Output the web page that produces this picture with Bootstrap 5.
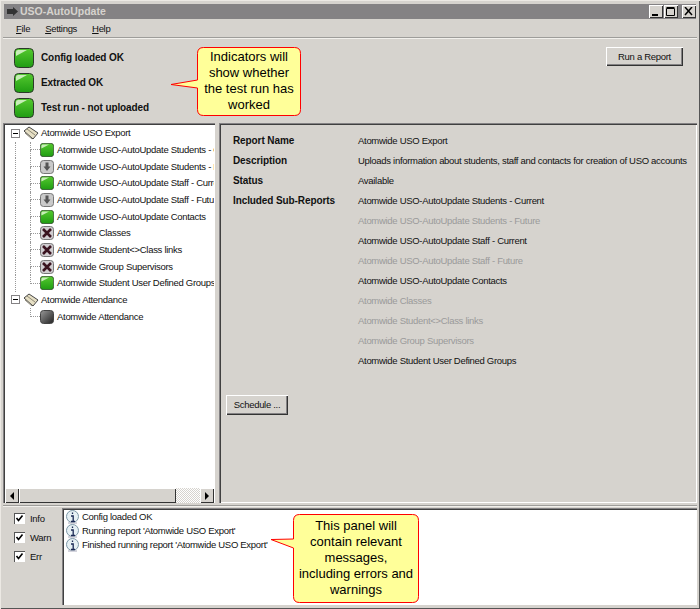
<!DOCTYPE html>
<html lang="en">
<head>
  <meta charset="UTF-8" />
  <title>USO-AutoUpdate</title>
  <link href="https://cdn.jsdelivr.net/npm/bootstrap@5.3.3/dist/css/bootstrap.min.css" rel="stylesheet" />
  <style>
    html, body { height: 100%; }
    body { background: #d6d3ce; color: #111; font: 9.5px/14px "Liberation Sans", sans-serif; letter-spacing: -.3px; overflow: hidden; }
    .app-window { width: 700px; height: 609px; position: relative; padding: 4px 3px 4px 3px; box-shadow: inset 1px 1px 0 #ece9e4, inset -1px -1px 0 #555; }
    .title-bar { height: 15px; background: #848284; color: #d6d3ce; font-weight: 700; font-size: 10.5px; letter-spacing: 0; line-height: 15px; padding-left: 2px; margin: 0 1px; }
    .title-ico { width: 13px; height: 11px; margin-right: 1px; }
    .win-btn { width: 14px; height: 13px; background: #d6d3ce; box-shadow: inset 1px 1px 0 #fff, inset -1px -1px 0 #333; margin-left: 1px; }
    .win-btn svg { display: block; margin: 2px 0 0 2px; }
    .menu-bar { height: 20px; padding: 2px 0 0 13px; gap: 15px; align-items: center; border-bottom: 2px groove #f2f0ec; }
    .menu-bar u { text-underline-offset: 1px; }
    .top-strip { height: 84px; padding: 6px 14px 0 11px; }
    .lamp-row { height: 25px; gap: 7px; font-weight: 700; font-size: 10px; letter-spacing: -.1px; }
    .lamp-row svg { width: 20px; height: 20px; }
    .sys-btn { background: #d6d3ce; border: 0; border-radius: 0; color: #111; font: 9.500px/14px "Liberation Sans", sans-serif; letter-spacing: -.3px; box-shadow: inset 1px 1px 0 #fff, inset -1px -1px 0 #333, inset -2px -2px 0 #848284; padding: 0; }
    .run-btn { width: 77px; height: 19px; margin-top: 2px; }
    .sched-btn { width: 62px; height: 20px; }
    .panes { height: 380px; gap: 4px; }
    .sunken { box-shadow: inset 1px 1px 0 #848284, inset 2px 2px 0 #404040, inset -1px -1px 0 #fff; }
    .tree-pane { width: 212px; flex: none; background: #fff; padding: 2px 1px 0 2px; }
    .tree-list { overflow: hidden; white-space: nowrap; }
    .tree-row { height: 16.67px; }
    .tree-root-guide { width: 11px; flex: none; align-self: stretch; border-right: 1px dotted #999; }
    .tree-root-guide.off { border-right-color: transparent; }
    .tree-gap { width: 14px; flex: none; }
    .tree-twig { width: 10px; flex: none; align-self: stretch; display: flex; flex-direction: column; }
    .tree-twig::before { content: ""; flex: 1; border-left: 1px dotted #999; border-bottom: 1px dotted #999; }
    .tree-twig::after { content: ""; flex: 1; border-left: 1px dotted #999; }
    .tree-twig.end::after { border-left-color: transparent; }
    .tree-ico { width: 14px; height: 14px; flex: none; margin-right: 3px; }
    .tree-box { width: 9px; height: 9px; flex: none; margin: 0 3px 0 6px; border: 1px solid #848284; background: #fff; }
    .tree-box svg { display: block; }
    .tree-book { width: 16px; height: 14px; flex: none; margin-right: 2px; }
    .scroll-bar { height: 15px; flex: none; background: repeating-conic-gradient(#d6d3ce 0 25%, #fff 0 50%) 0 0 / 2px 2px; }
    .scroll-btn { width: 14px; background: #d6d3ce; box-shadow: inset 1px 1px 0 #fff, inset -1px -1px 0 #333; flex: none; }
    .scroll-thumb { width: 157px; background: #d6d3ce; box-shadow: inset 1px 1px 0 #fff, inset -1px -1px 0 #333; flex: none; }
    .detail-pane { flex: 1; padding: 8px 4px 0 14px; line-height: 20px; overflow: hidden; }
    .detail-row { height: 20px; white-space: nowrap; }
    .detail-label { width: 125px; flex: none; font-weight: 700; font-size: 10px; letter-spacing: -.1px; }
    .detail-value.off { color: #9a9a9a; }
    .sched-wrap { margin: 24px 0 0 -7px; }
    .log-strip { height: 100px; margin-top: 2px; border-top: 2px groove #f2f0ec; padding-top: 1px; }
    .check-col { width: 59px; flex: none; padding: 1px 0 0 11px; line-height: 19px; }
    .chk { width: 11px; height: 11px; margin: 0 5px 0 0; border-radius: 0 !important; border: 0; background-color: #fff; box-shadow: inset 1px 1px 0 #555; float: none; }
    .form-check-input.chk:checked { background-color: #fff; border: 0; background-size: 11px 11px; background-image: url("data:image/svg+xml,%3Csvg xmlns='http://www.w3.org/2000/svg' viewBox='0 0 11 11'%3E%3Cpath d='M2.5 5l2 2.5 4-5' fill='none' stroke='%23000' stroke-width='1.6'/%3E%3C/svg%3E"); }
    .log-box { flex: 1; background: #fff; padding: 2px 4px; white-space: nowrap; }
    .log-row { height: 14px; gap: 2px; }
    .log-row svg { width: 14px; height: 14px; flex: none; }
    .callout { position: absolute; color: #000; font: 13px/16px "Liberation Sans", sans-serif; letter-spacing: 0; text-align: center; z-index: 2; }
    .callout svg { position: absolute; left: 0; top: 0; overflow: visible; z-index: -1; }
    .callout-one { left: 197px; top: 47px; width: 104px; height: 69px; padding-top: 2px; }
    .callout-two { left: 293px; top: 514px; width: 126px; height: 89px; padding-top: 4px; }
  </style>
</head>
<body>
  <svg width="0" height="0" class="d-block" style="position:absolute">
    <defs>
      <linearGradient id="gr" x1="0" y1="0" x2="0" y2="1"><stop offset="0" stop-color="#55c92f"/><stop offset="1" stop-color="#1f9c12"/></linearGradient>
      <linearGradient id="dk" x1="0" y1="0" x2="1" y2="1"><stop offset="0" stop-color="#999"/><stop offset="1" stop-color="#222"/></linearGradient>
      <symbol id="i-green" viewBox="0 0 20 20"><rect x=".5" y=".5" width="19" height="19" rx="4" fill="url(#gr)" stroke="#2c3a2a"/><path d="M2 8V4q0-2 2-2h9z" fill="#c8edb8"/></symbol>
      <symbol id="i-down" viewBox="0 0 14 14"><rect x=".5" y=".5" width="13" height="13" rx="3" fill="#c9c9c9" stroke="#777"/><path d="M5.500 2.500h3v4h2L7 11 3.500 6.500h2z" fill="#555"/></symbol>
      <symbol id="i-cross" viewBox="0 0 14 14"><rect x=".5" y=".5" width="13" height="13" rx="3" fill="#d0cdd0" stroke="#777"/><path d="M3 3l8 8M11 3l-8 8" stroke="#3a1420" stroke-width="2.600"/></symbol>
      <symbol id="i-dark" viewBox="0 0 14 14"><rect x=".5" y=".5" width="13" height="13" rx="3" fill="url(#dk)" stroke="#444"/></symbol>
      <symbol id="i-book" viewBox="0 0 16 14"><path d="M1 5l5-4 9 6-5 6z" fill="#e6dfc4" stroke="#444"/><path d="M2 7l7 6M4 3l8 6" stroke="#8f8a78" fill="none"/></symbol>
      <symbol id="i-info" viewBox="0 0 14 14"><circle cx="6.500" cy="6.500" r="6" fill="#e6f0f4" stroke="#7d98a8"/><path d="M6.500 2.500v1.500M5 6h2.200v5M5 11.500h4" stroke="#1c2a55" stroke-width="1.300" fill="none"/><path d="M2 13h9" stroke="#aab" /></symbol>
    </defs>
  </svg>

  <div class="app-window d-flex flex-column">
    <div class="title-bar d-flex align-items-center">
      <svg class="title-ico" viewBox="0 0 13 11"><path d="M1 3h6V1l5 4.500-5 4.500V8H1z" fill="#333"/></svg>
      <span class="flex-grow-1">USO-AutoUpdate</span>
      <span class="win-btn"><svg width="10" height="9"><path d="M1 7h6v2H1z" fill="#000"/></svg></span>
      <span class="win-btn"><svg width="10" height="9"><path d="M.5 1.500h8v7h-8zM.5.500h8" fill="none" stroke="#000"/></svg></span>
      <span class="win-btn ms-1"><svg width="10" height="9"><path d="M1 0l7 8M8 0L1 8" stroke="#000" stroke-width="1.500"/></svg></span>
    </div>

    <div class="menu-bar d-flex">
      <span><u>F</u>ile</span>
      <span><u>S</u>ettings</span>
      <span><u>H</u>elp</span>
    </div>

    <div class="top-strip d-flex justify-content-between">
      <div>
        <div class="lamp-row d-flex align-items-center"><svg><use href="#i-green"/></svg>Config loaded OK</div>
        <div class="lamp-row d-flex align-items-center"><svg><use href="#i-green"/></svg>Extracted OK</div>
        <div class="lamp-row d-flex align-items-center"><svg><use href="#i-green"/></svg>Test run - not uploaded</div>
      </div>
      <div><button class="btn sys-btn run-btn">Run a Report</button></div>
    </div>

    <div class="panes d-flex">
      <div class="tree-pane sunken d-flex flex-column">
        <div class="tree-list flex-grow-1" id="tree"></div>
        <div class="scroll-bar d-flex justify-content-between">
          <div class="d-flex">
            <div class="scroll-btn d-flex align-items-center justify-content-center"><svg width="5" height="8"><path d="M4 0v8L0 4z" fill="#000"/></svg></div>
            <div class="scroll-thumb"></div>
          </div>
          <div class="scroll-btn d-flex align-items-center justify-content-center"><svg width="5" height="8"><path d="M0 0v8l4-4z" fill="#000"/></svg></div>
        </div>
      </div>

      <div class="detail-pane sunken">
        <div class="detail-row d-flex"><div class="detail-label">Report Name</div><div class="detail-value">Atomwide USO Export</div></div>
        <div class="detail-row d-flex"><div class="detail-label">Description</div><div class="detail-value">Uploads information about students, staff and contacts for creation of USO accounts</div></div>
        <div class="detail-row d-flex"><div class="detail-label">Status</div><div class="detail-value">Available</div></div>
        <div class="detail-row d-flex"><div class="detail-label">Included Sub-Reports</div><div class="detail-value">Atomwide USO-AutoUpdate Students - Current</div></div>
        <div class="detail-row d-flex"><div class="detail-label"></div><div class="detail-value off">Atomwide USO-AutoUpdate Students - Future</div></div>
        <div class="detail-row d-flex"><div class="detail-label"></div><div class="detail-value">Atomwide USO-AutoUpdate Staff - Current</div></div>
        <div class="detail-row d-flex"><div class="detail-label"></div><div class="detail-value off">Atomwide USO-AutoUpdate Staff - Future</div></div>
        <div class="detail-row d-flex"><div class="detail-label"></div><div class="detail-value">Atomwide USO-AutoUpdate Contacts</div></div>
        <div class="detail-row d-flex"><div class="detail-label"></div><div class="detail-value off">Atomwide Classes</div></div>
        <div class="detail-row d-flex"><div class="detail-label"></div><div class="detail-value off">Atomwide Student&lt;&gt;Class links</div></div>
        <div class="detail-row d-flex"><div class="detail-label"></div><div class="detail-value off">Atomwide Group Supervisors</div></div>
        <div class="detail-row d-flex"><div class="detail-label"></div><div class="detail-value">Atomwide Student User Defined Groups</div></div>
        <div class="sched-wrap"><button class="btn sys-btn sched-btn">Schedule ...</button></div>
      </div>
    </div>

    <div class="log-strip d-flex">
      <div class="check-col">
        <label class="d-flex align-items-center"><input class="form-check-input chk" type="checkbox" checked />Info</label>
        <label class="d-flex align-items-center"><input class="form-check-input chk" type="checkbox" checked />Warn</label>
        <label class="d-flex align-items-center"><input class="form-check-input chk" type="checkbox" checked />Err</label>
      </div>
      <div class="log-box sunken">
        <div class="log-row d-flex align-items-center"><svg><use href="#i-info"/></svg>Config loaded OK</div>
        <div class="log-row d-flex align-items-center"><svg><use href="#i-info"/></svg>Running report 'Atomwide USO Export'</div>
        <div class="log-row d-flex align-items-center"><svg><use href="#i-info"/></svg>Finished running report 'Atomwide USO Export'</div>
      </div>
    </div>

    <div class="callout callout-one">
      <svg width="104" height="69"><path d="M6.500.5H97.500q6 0 6 6V62.500q0 6-6 6H6.500q-6 0-6-6V41L-26 37.500 .5 33V6.500q0-6 6-6z" fill="#ffff99" stroke="#f00"/></svg>
      Indicators will<br />show whether<br />the test run has<br />worked
    </div>
    <div class="callout callout-two">
      <svg width="126" height="89"><path d="M6.500.5H119.500q6 0 6 6V82.500q0 6-6 6H6.500q-6 0-6-6V34L-22 25.500 .5 25V6.500q0-6 6-6z" fill="#ffff99" stroke="#f00"/></svg>
      This panel will<br />contain relevant<br />messages,<br />including errors and<br />warnings
    </div>
  </div>

  <script>
    const treeData = [
      { icon: "i-green", text: "Atomwide USO-AutoUpdate Students - Current" },
      { icon: "i-down", text: "Atomwide USO-AutoUpdate Students - Future" },
      { icon: "i-green", text: "Atomwide USO-AutoUpdate Staff - Current" },
      { icon: "i-down", text: "Atomwide USO-AutoUpdate Staff - Future" },
      { icon: "i-green", text: "Atomwide USO-AutoUpdate Contacts" },
      { icon: "i-cross", text: "Atomwide Classes" },
      { icon: "i-cross", text: "Atomwide Student&lt;&gt;Class links" },
      { icon: "i-cross", text: "Atomwide Group Supervisors" },
      { icon: "i-green", text: "Atomwide Student User Defined Groups" },
    ];

    function rootRow(text) {
      return `<div class="tree-row d-flex align-items-center">
        <span class="tree-box"><svg width="7" height="7"><path d="M1 3.500h5" stroke="#000"/></svg></span>
        <svg class="tree-book"><use href="#i-book"/></svg>${text}</div>`;
    }

    function childRow(item, last, guide) {
      return `<div class="tree-row d-flex align-items-center">
        <span class="tree-root-guide ${guide ? "" : "off"}"></span><span class="tree-gap"></span>
        <span class="tree-twig ${last ? "end" : ""}"></span>
        <svg class="tree-ico"><use href="#${item.icon}"/></svg>${item.text}</div>`;
    }

    let html = rootRow("Atomwide USO Export");
    treeData.forEach((item, i) => {
      html += childRow(item, i === treeData.length - 1, true);
    });
    html += rootRow("Atomwide Attendance");
    html += childRow({ icon: "i-dark", text: "Atomwide Attendance" }, true, false);
    document.getElementById("tree").innerHTML = html;
  </script>
</body>
</html>
